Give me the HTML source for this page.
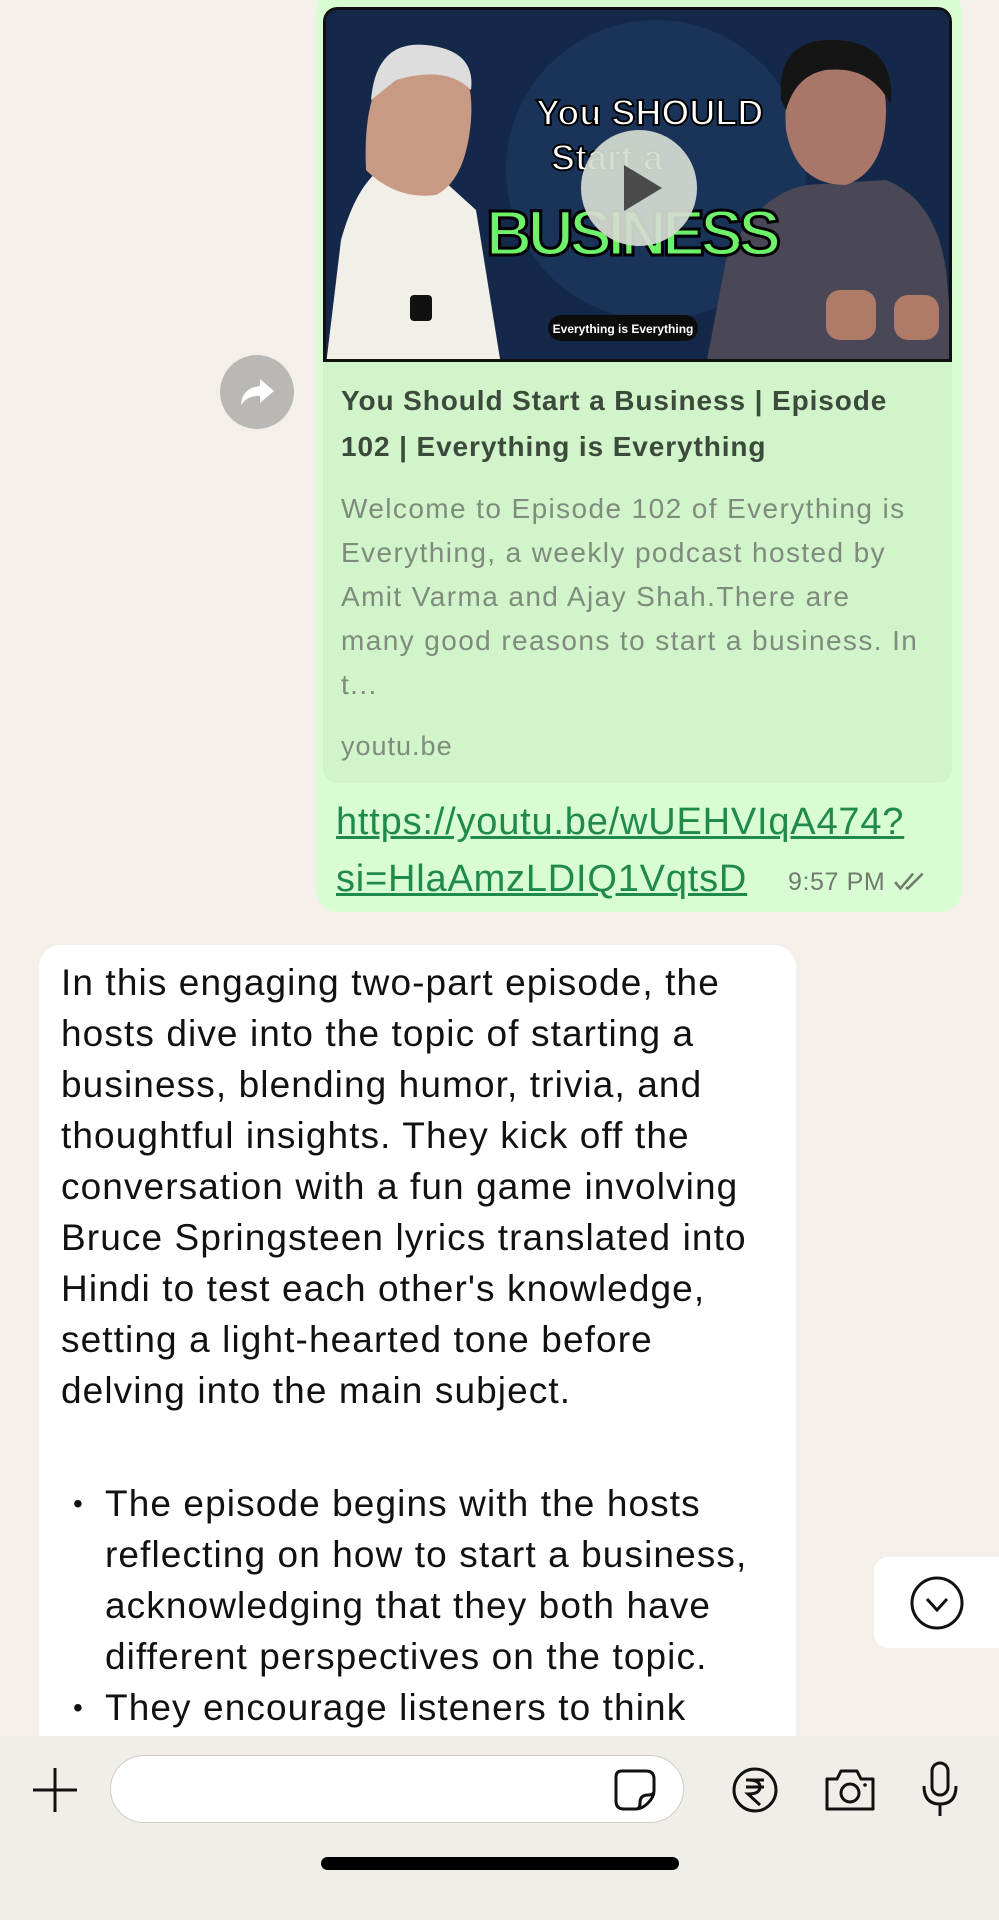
<!DOCTYPE html>
<html><head><meta charset="utf-8">
<style>
*{margin:0;padding:0;box-sizing:border-box}
html,body{width:999px;height:1920px;overflow:hidden}
body{background:#f4f0e9;font-family:"Liberation Sans",sans-serif;position:relative}
.abs{position:absolute;white-space:nowrap}
.green{left:316px;top:-10px;width:646px;height:922px;background:#d9fdd3;border-radius:22px}
.card{left:323px;top:7px;width:629px;height:776px;background:#d1f4cb;border-radius:14px;overflow:hidden}
.thumb{left:0;top:0;width:629px;height:355px;background:#14294a;border:3px solid #111;border-radius:14px 14px 0 0;overflow:hidden}
.title{left:341px;top:378px;font-size:28px;font-weight:bold;color:#3b4a3a;line-height:46px;letter-spacing:0.9px}
.desc{left:341px;top:487px;font-size:28px;color:#7f8b7d;line-height:44px;letter-spacing:1.4px}
.src{left:341px;top:731px;font-size:27px;color:#7f8b7d;letter-spacing:1px}
.link{left:336px;top:794px;font-size:38px;color:#1f8a4c;text-decoration:underline;line-height:57px;letter-spacing:0.8px}
.time{left:788px;top:868px;font-size:25px;color:#6f7b6d;letter-spacing:0.6px}
.fwd{left:220px;top:355px;width:74px;height:74px;border-radius:50%;background:#b9b8b5}
.white{left:39px;top:945px;width:757px;height:820px;background:#fff;border-radius:22px}
.body{left:61px;top:957px;font-size:37px;color:#111;line-height:51px;letter-spacing:1.1px}
.bul{left:105px;top:1478px;font-size:37px;color:#111;line-height:51px;letter-spacing:1.1px}
.dot{position:absolute;left:-32px;font-size:28px}
.scroll{left:874px;top:1557px;width:140px;height:91px;background:#fff;border-radius:14px 0 0 14px}
.bar{left:0;top:1736px;width:999px;height:184px;background:#f1eee9}
.input{left:110px;top:1755px;width:574px;height:68px;background:#fff;border:1.5px solid #cfccc7;border-radius:34px}
.home{left:321px;top:1857px;width:358px;height:13px;background:#000;border-radius:7px}
</style></head><body>
<div class="abs green"></div>
<div class="abs card">
  <div class="abs thumb">
    <svg width="629" height="355" viewBox="0 0 629 355">
      <circle cx="330" cy="160" r="150" fill="#1a3358"/>
      <path d="M0 355 L15 230 Q40 140 95 150 L150 200 L175 355Z" fill="#f2efe9"/>
      <path d="M40 160 Q35 50 95 40 Q150 40 145 110 Q140 170 110 185 Q70 190 40 160Z" fill="#c89a84"/>
      <path d="M45 90 Q50 30 100 35 Q150 40 145 80 Q120 55 70 70Z" fill="#ddd"/>
      <rect x="84" y="285" width="22" height="26" rx="4" fill="#111"/>
      <path d="M380 355 L400 250 Q430 185 480 175 L560 170 Q610 190 620 260 L629 355Z" fill="#4a4756"/>
      <path d="M460 120 Q455 50 500 40 Q560 40 560 100 Q560 160 520 175 Q470 175 460 120Z" fill="#a8776a"/>
      <path d="M455 90 Q450 30 505 30 Q570 30 565 95 Q545 55 500 60 Q470 65 460 100Z" fill="#151515"/>
      <rect x="500" y="280" width="50" height="50" rx="14" fill="#b07a68"/>
      <rect x="568" y="285" width="45" height="45" rx="14" fill="#b07a68"/>
      <text x="210" y="115" font-family="Liberation Sans" font-weight="bold" font-size="36" fill="#fff" stroke="#000" stroke-width="2">You SHOULD</text>
      <text x="225" y="160" font-family="Liberation Sans" font-weight="bold" font-size="36" fill="#fff" stroke="#000" stroke-width="2">Start a</text>
      <text x="160" y="245" font-family="Liberation Sans" font-weight="bold" font-size="64" fill="#6ef26a" stroke="#000" stroke-width="3" textLength="295">BUSINESS</text>
      <rect x="222" y="305" width="150" height="26" rx="13" fill="#0d0d0d"/>
      <text x="297" y="323" text-anchor="middle" font-family="Liberation Sans" font-weight="bold" font-size="12" fill="#fff">Everything is Everything</text>
      <circle cx="313" cy="178" r="58" fill="#d4dcd1" fill-opacity="0.93"/>
      <path d="M298 155 L336 178 L298 201Z" fill="#4a4a4a"/>
    </svg>
  </div>
</div>
<div class="abs title">You Should Start a Business | Episode<br>102 | Everything is Everything</div>
<div class="abs desc">Welcome to Episode 102 of Everything is<br>Everything, a weekly podcast hosted by<br>Amit Varma and Ajay Shah.There are<br>many good reasons to start a business. In<br>t...</div>
<div class="abs src">youtu.be</div>
<div class="abs link">https://youtu.be/wUEHVIqA474?<br>si=HlaAmzLDIQ1VqtsD</div>
<div class="abs time">9:57 PM <svg width="36" height="22" viewBox="0 0 34 20" style="vertical-align:-2px"><path d="M2 11 L7 17 L19 3 M12 16 L14 17 L28 3" stroke="#6f7b6d" stroke-width="2.4" fill="none"/></svg></div>
<div class="abs fwd"><svg width="74" height="74" viewBox="0 0 74 74"><path d="M40 24 L54 36 L40 48 L40 41 Q28 40 21 50 Q22 33 40 31Z" fill="#fff"/></svg></div>

<div class="abs white"></div>
<div class="abs body">In this engaging two-part episode, the<br>hosts dive into the topic of starting a<br>business, blending humor, trivia, and<br>thoughtful insights. They kick off the<br>conversation with a fun game involving<br>Bruce Springsteen lyrics translated into<br>Hindi to test each other's knowledge,<br>setting a light-hearted tone before<br>delving into the main subject.</div>
<div class="abs bul"><div style="position:relative"><span class="dot">•</span>The episode begins with the hosts<br>reflecting on how to start a business,<br>acknowledging that they both have<br>different perspectives on the topic.</div><div style="position:relative"><span class="dot">•</span>They encourage listeners to think</div></div>
<div class="abs scroll"><svg width="125" height="91" viewBox="0 0 125 91"><circle cx="63" cy="46" r="25" stroke="#111" stroke-width="3" fill="none"/><path d="M53 42 L63 53 L73 42" stroke="#111" stroke-width="3" fill="none"/></svg></div>

<div class="abs bar"></div>
<svg class="abs" style="left:30px;top:1765px" width="50" height="50" viewBox="0 0 50 50"><path d="M25 3 V47 M3 25 H47" stroke="#111" stroke-width="3"/></svg>
<div class="abs input"></div>
<svg class="abs" style="left:612px;top:1767px" width="46" height="46" viewBox="0 0 46 46"><path d="M10 4 H34 Q42 4 42 12 V24 Q42 30 36 36 Q30 42 24 42 H12 Q4 42 4 34 V10 Q4 4 10 4Z M42 24 Q42 28 36 28 Q28 28 28 36 Q28 42 24 42" stroke="#111" stroke-width="3" fill="none"/></svg>
<svg class="abs" style="left:730px;top:1765px" width="50" height="50" viewBox="0 0 50 50"><circle cx="25" cy="25" r="21" stroke="#111" stroke-width="3" fill="none"/><path d="M16 15 H34 M16 22 H34 M18 15 Q30 15 30 22 Q30 29 18 29 L30 40" stroke="#111" stroke-width="3" fill="none"/></svg>
<svg class="abs" style="left:823px;top:1765px" width="54" height="50" viewBox="0 0 54 50"><path d="M4 14 H14 L18 6 H34 L38 14 H50 V44 H4Z" stroke="#111" stroke-width="3" fill="none" stroke-linejoin="round"/><circle cx="27" cy="28" r="9" stroke="#111" stroke-width="3" fill="none"/><circle cx="42" cy="20" r="1.8" fill="#111"/></svg>
<svg class="abs" style="left:920px;top:1760px" width="40" height="60" viewBox="0 0 40 60"><rect x="12" y="3" width="16" height="32" rx="8" stroke="#111" stroke-width="3" fill="none"/><path d="M4 26 Q4 44 20 44 Q36 44 36 26 M20 44 V56" stroke="#111" stroke-width="3" fill="none"/></svg>
<div class="abs home"></div>
</body></html>
